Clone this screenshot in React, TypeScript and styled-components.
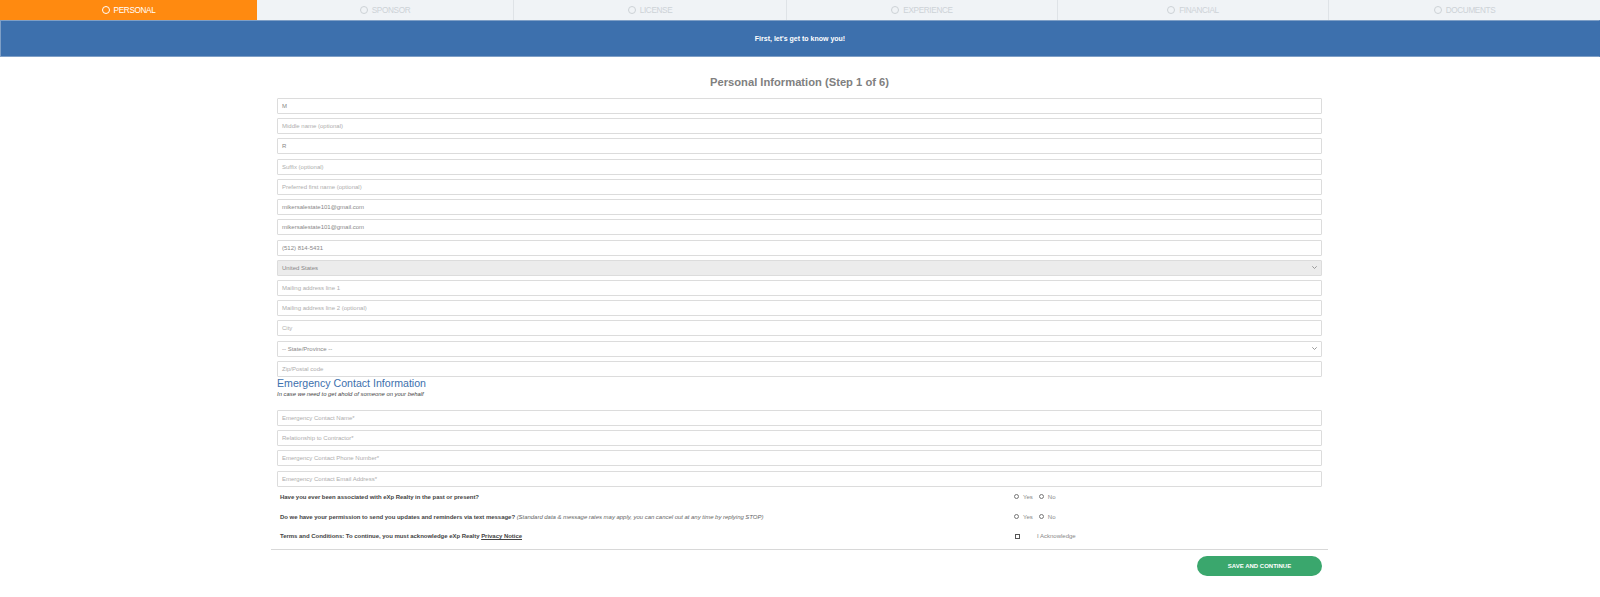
import React from 'react';
import styled, { createGlobalStyle } from 'styled-components';

const GlobalStyle = createGlobalStyle`
  html, body {
    margin: 0;
    padding: 0;
    background: #fff;
    font-family: "Liberation Sans", Arial, sans-serif;
  }
`;

const Page = styled.div`
  width: 1600px;
  height: 597px;
  overflow: hidden;
  background: #fff;
`;

const Steps = styled.div`
  display: grid;
  grid-template-columns: 257px 256px 273px 271px 271px 272px;
  height: 20px;
  background: #f0f3f6;
`;

const Step = styled.div<{ $active?: boolean }>`
  display: flex;
  align-items: center;
  justify-content: center;
  gap: 4px;
  font-size: 8.2px;
  letter-spacing: -0.35px;
  color: ${({ $active }) => ($active ? '#fff' : '#cdd2d6')};
  background: ${({ $active }) => ($active ? '#ff8a10' : 'transparent')};
  border-left: ${({ $active }) => ($active ? 'none' : '1px solid #dfe3e7')};
  &:nth-child(2) {
    border-left: none;
  }
`;

const StepDot = styled.span`
  width: 6px;
  height: 6px;
  border: 1px solid currentColor;
  border-radius: 50%;
`;

const Banner = styled.div`
  height: 37px;
  display: flex;
  align-items: center;
  justify-content: center;
  background: #3d70ad;
  border: 1px solid #7f9fc6;
  border-right-color: #3d70ad;
  box-sizing: border-box;
  color: #fff;
  font-size: 7px;
  font-weight: 700;
`;

const Content = styled.div`
  width: 1045px;
  margin-left: 277px;
`;

const Title = styled.h2`
  margin: 18px 0 0;
  height: 23px;
  line-height: 15px;
  text-align: center;
  font-size: 11.2px;
  font-weight: 700;
  color: #808080;
`;

const Fields = styled.div`
  display: flex;
  flex-direction: column;
  gap: 4.23px;
`;

const Field = styled.div<{ $filled?: boolean; $shaded?: boolean }>`
  height: 16px;
  box-sizing: border-box;
  display: flex;
  align-items: center;
  justify-content: space-between;
  padding: 0 4px 0 4px;
  border: 1px solid #dcdcdc;
  border-radius: 1px;
  background: ${({ $shaded }) => ($shaded ? '#ececec' : '#fff')};
  font-size: 6px;
  color: ${({ $filled }) => ($filled ? '#888' : '#aeaeae')};
`;

const Chevron = styled.svg`
  width: 5px;
  height: 3px;
  fill: none;
  stroke: #999;
  stroke-width: 1;
`;

const SectionHeading = styled.h3`
  margin: -1px 0 0;
  font-size: 10.6px;
  line-height: 14px;
  font-weight: 400;
  color: #3d70ad;
`;

const SectionNote = styled.p`
  margin: 0;
  height: 20px;
  font-size: 5.9px;
  line-height: 8px;
  font-style: italic;
  color: #444;
`;

const Questions = styled.div`
  padding-left: 3px;
`;

const Question = styled.div<{ $height: number }>`
  height: ${({ $height }) => $height}px;
  display: grid;
  grid-template-columns: 734px 1fr;
  align-items: center;
  font-size: 6px;
  color: #444;
`;

const QuestionText = styled.span`
  font-weight: 700;
  letter-spacing: -0.035px;
  white-space: nowrap;
`;

const Aside = styled.em`
  font-weight: 400;
  color: #666;
`;

const NoticeLink = styled.span`
  text-decoration: underline;
`;

const Options = styled.div`
  display: flex;
  align-items: center;
  gap: 4px;
  font-size: 6px;
  color: #888;
`;

const Radio = styled.span`
  width: 3px;
  height: 3px;
  border: 1px solid #777;
  border-radius: 50%;
  &:not(:first-child) {
    margin-left: 2px;
  }
`;

const Check = styled.span`
  width: 3px;
  height: 3px;
  margin: 0 13px 0 1px;
  border: 1px solid #555;
`;

const Divider = styled.hr`
  margin: 3px -6px 0;
  border: none;
  border-top: 1px solid #d8d8d8;
`;

const Actions = styled.div`
  display: flex;
  justify-content: flex-end;
  margin-top: 6px;
`;

const SaveButton = styled.button`
  width: 125px;
  height: 20px;
  padding: 0;
  border: none;
  border-radius: 10px;
  background: #3aa76d;
  color: #fff;
  font-family: inherit;
  font-size: 6px;
  font-weight: 700;
`;

const steps = ['PERSONAL', 'SPONSOR', 'LICENSE', 'EXPERIENCE', 'FINANCIAL', 'DOCUMENTS'];

const personalFields = [
  { text: 'M', filled: true },
  { text: 'Middle name (optional)' },
  { text: 'R', filled: true },
  { text: 'Suffix (optional)' },
  { text: 'Preferred first name (optional)' },
  { text: 'mikersalestate101@gmail.com', filled: true },
  { text: 'mikersalestate101@gmail.com', filled: true },
  { text: '(512) 814-5431', filled: true },
  { text: 'United States', filled: true, shaded: true, select: true },
  { text: 'Mailing address line 1' },
  { text: 'Mailing address line 2 (optional)' },
  { text: 'City' },
  { text: '-- State/Province --', filled: true, select: true },
  { text: 'Zip/Postal code' },
];

const emergencyFields = [
  'Emergency Contact Name*',
  'Relationship to Contractor*',
  'Emergency Contact Phone Number*',
  'Emergency Contact Email Address*',
];

function YesNo() {
  return (
    <Options>
      <Radio />
      Yes
      <Radio />
      No
    </Options>
  );
}

export default function App() {
  return (
    <Page>
      <GlobalStyle />
      <Steps>
        {steps.map((step, i) => (
          <Step key={step} $active={i === 0}>
            <StepDot />
            {step}
          </Step>
        ))}
      </Steps>
      <Banner>First, let's get to know you!</Banner>
      <Content>
        <Title>Personal Information (Step 1 of 6)</Title>
        <Fields>
          {personalFields.map((f, i) => (
            <Field key={i} $filled={f.filled} $shaded={f.shaded}>
              {f.text}
              {f.select && (
                <Chevron viewBox="0 0 5 3">
                  <path d="M0.3 0.3 L2.5 2.5 L4.7 0.3" />
                </Chevron>
              )}
            </Field>
          ))}
        </Fields>
        <SectionHeading>Emergency Contact Information</SectionHeading>
        <SectionNote>In case we need to get ahold of someone on your behalf</SectionNote>
        <Fields>
          {emergencyFields.map((text) => (
            <Field key={text}>{text}</Field>
          ))}
        </Fields>
        <Questions>
          <Question $height={20}>
            <QuestionText>Have you ever been associated with eXp Realty in the past or present?</QuestionText>
            <YesNo />
          </Question>
          <Question $height={20}>
            <QuestionText>
              Do we have your permission to send you updates and reminders via text message?{' '}
              <Aside>(Standard data &amp; message rates may apply, you can cancel out at any time by replying STOP)</Aside>
            </QuestionText>
            <YesNo />
          </Question>
          <Question $height={19}>
            <QuestionText>
              Terms and Conditions: To continue, you must acknowledge eXp Realty <NoticeLink>Privacy Notice</NoticeLink>
            </QuestionText>
            <Options>
              <Check />I Acknowledge
            </Options>
          </Question>
        </Questions>
        <Divider />
        <Actions>
          <SaveButton>SAVE AND CONTINUE</SaveButton>
        </Actions>
      </Content>
    </Page>
  );
}
